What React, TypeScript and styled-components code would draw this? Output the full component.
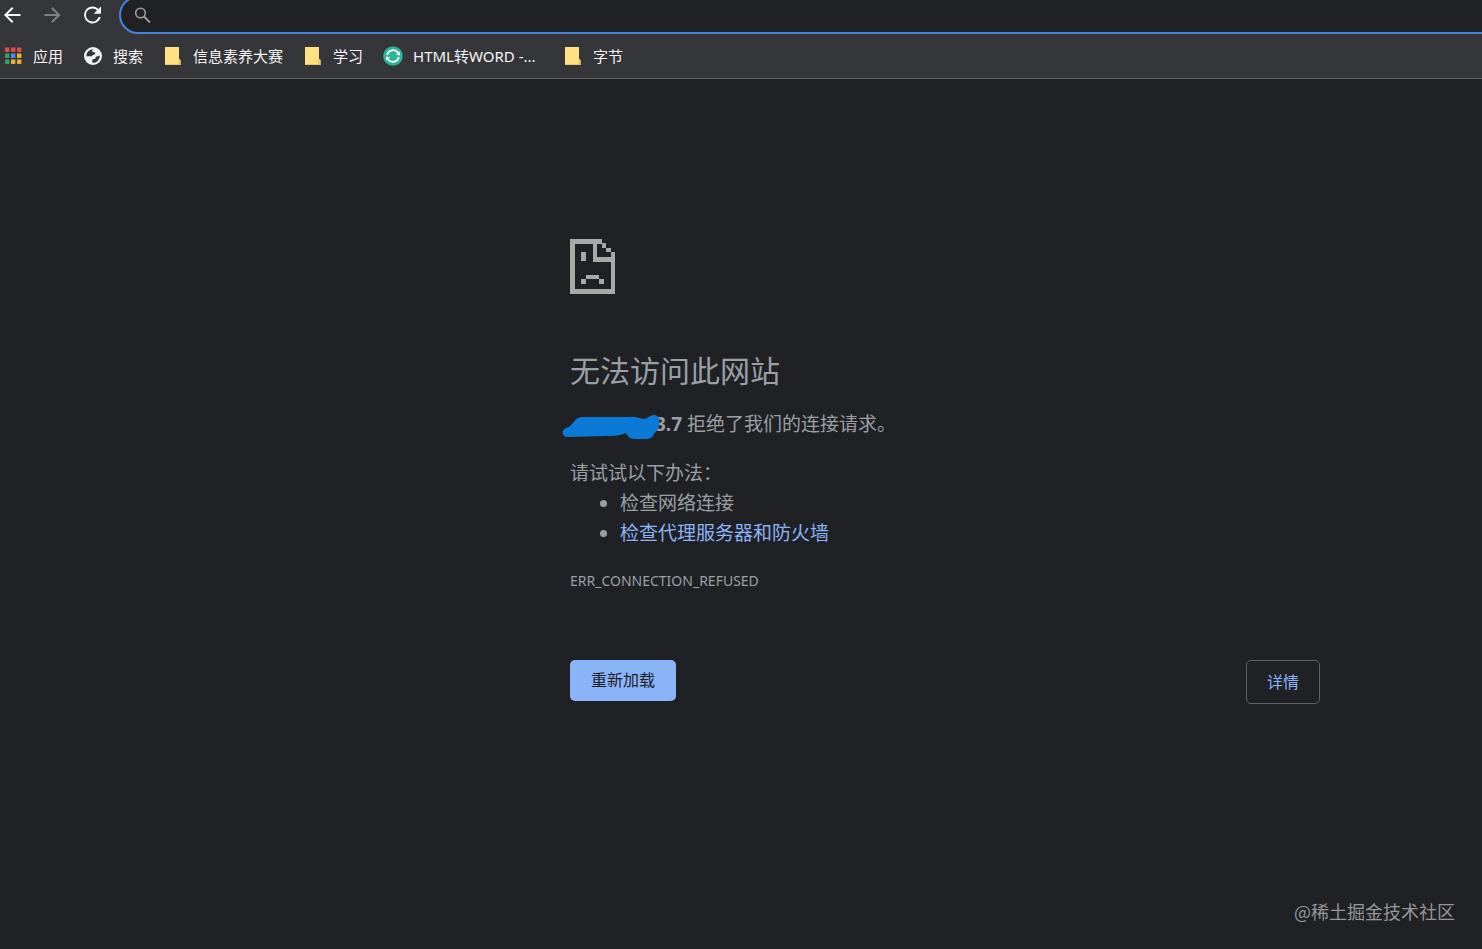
import React from "react";
import styled, { createGlobalStyle } from "styled-components";

const Global = createGlobalStyle`
  * { box-sizing: border-box; }
  body {
    margin: 0;
    background: #202124;
    color: #9aa0a6;
    font-family: "Noto Sans", "Noto Sans CJK SC", sans-serif;
  }
`;

const Page = styled.div`
  min-height: 100vh;
  display: flex;
  flex-direction: column;
  overflow: hidden;
`;

const Chrome = styled.header`
  background: #35363a;
  border-bottom: 1px solid #5c5e62;
  overflow: hidden;
`;

const Toolbar = styled.div`
  display: flex;
  height: 34px;
`;

const NavButtons = styled.div`
  display: flex;
  align-items: center;
  gap: 16px;
  height: 30px;
  margin-right: 15px;
`;

const NavButton = styled.button<{ $dim?: boolean }>`
  display: flex;
  padding: 0;
  border: 0;
  background: none;
  color: ${(p) => (p.$dim ? "#7f8184" : "#f4f5f6")};
`;

const Omnibox = styled.label`
  flex: 1;
  display: flex;
  align-items: center;
  gap: 12px;
  height: 38px;
  margin: -4px -24px 0 0;
  padding-left: 12px;
  border: 2px solid #4a82e0;
  border-radius: 20px;
  background: #202124;
  color: #9aa0a6;
`;

const UrlInput = styled.input`
  flex: 1;
  border: 0;
  outline: 0;
  background: none;
  color: #e8eaed;
  font: inherit;
`;

const Bookmarks = styled.nav`
  display: flex;
  align-items: center;
  gap: 20px;
  height: 44px;
  padding-left: 3px;
`;

const Bookmark = styled.a<{ $long?: boolean }>`
  display: flex;
  align-items: center;
  gap: 10px;
  min-width: ${(p) => (p.$long ? "160px" : "0")};
  color: #f4f5f6;
  font-size: 15px;
  line-height: 20px;
  text-decoration: none;
  white-space: nowrap;
`;

const ErrorPanel = styled.main`
  width: 750px;
  max-width: 100%;
  margin: 160px 162px 0 auto;
  font-size: 19px;
  line-height: 30px;
`;

const Title = styled.h1`
  margin: 54px 0 15px;
  font-size: 30px;
  font-weight: 400;
  line-height: 46px;
`;

const Text = styled.p`
  margin: 0;
`;

const Host = styled.strong`
  position: relative;
  display: inline-block;
  padding-left: 85px;
`;

const Scribble = styled.svg`
  position: absolute;
  left: -8px;
  top: 5px;
`;

const Suggestions = styled.section`
  margin-top: 19px;
`;

const List = styled.ul`
  margin: 0;
  padding-left: 50px;
`;

const HelpLink = styled.a`
  color: #8ab4f8;
  text-decoration: none;
`;

const ErrorCode = styled.p`
  margin: 21px 0 0;
  font-size: 14px;
  line-height: 24px;
`;

const Actions = styled.div`
  display: flex;
  justify-content: space-between;
  align-items: flex-start;
  margin-top: 67px;
`;

const Button = styled.button<{ $outlined?: boolean }>`
  padding: ${(p) => (p.$outlined ? "8px 20px" : "8px 21px")};
  border: ${(p) => (p.$outlined ? "1px solid #5f6368" : "0")};
  border-radius: 5px;
  background: ${(p) => (p.$outlined ? "transparent" : "#8ab4f8")};
  color: ${(p) => (p.$outlined ? "#8ab4f8" : "#202124")};
  font: inherit;
  font-size: 16px;
  line-height: ${(p) => (p.$outlined ? "26px" : "25px")};
`;

const Watermark = styled.footer`
  margin: auto 27px 25px auto;
  color: #95979a;
  font-family: "Noto Sans CJK SC", sans-serif;
  font-size: 18px;
  line-height: 26px;
`;

const Glyph = ({ d }: { d: string }) => (
  <svg width="24" height="24" viewBox="0 0 24 24" fill="currentColor" aria-hidden="true">
    <path d={d} />
  </svg>
);

const SearchIcon = () => (
  <svg width="20" height="20" viewBox="0 0 20 20" fill="none" stroke="currentColor" aria-hidden="true">
    <circle cx="7.5" cy="8" r="4.8" strokeWidth="1.6" />
    <path d="M11 11.5l6 6" strokeWidth="1.8" />
  </svg>
);

const appColors = ["#dd5144", "#dd5144", "#dd5144", "#34a06a", "#4a8af4", "#f0b429", "#34a06a", "#f0b429", "#f0b429"];

const AppsIcon = () => (
  <svg width="20" height="20" viewBox="0 0 20 20" aria-hidden="true">
    {appColors.map((c, i) => (
      <rect key={i} x={2 + (i % 3) * 6} y={1.5 + Math.floor(i / 3) * 6} width="4.4" height="4.4" fill={c} />
    ))}
  </svg>
);

const GlobeIcon = () => (
  <svg width="20" height="20" viewBox="0 0 20 20" aria-hidden="true">
    <circle cx="10" cy="10" r="9" fill="#f1f2f4" />
    <path d="M11 3.200C9 3.600 8.600 5 9.600 5.800c1 .7 2.600.2 2.700 1.500 0 1.200-1.200 1.300-2.300 1.700-.9.400-.4 1.300-1.800 1.300H3.200A6.900 6.900 0 0 1 11 3.200z" fill="#35363a" />
    <path d="M16.900 9.600c-1 .1-1.500.9-2.900.9-1.200 0-1.300.3-1.300 1.100 0 1-.6 1.300-1.700 1.400-1.300.1-1.700.8-1.700 1.800v2A6.900 6.900 0 0 0 16.900 9.600z" fill="#35363a" />
  </svg>
);

const FolderIcon = () => (
  <svg width="20" height="20" viewBox="0 0 20 20" aria-hidden="true">
    <path d="M2 1h14v12l1.500 1v5H2z" fill="#ffe082" />
    <path d="M14.800 19v-4.500l1.200-1.500 1.500 1v5z" fill="#efcf6c" />
    <path d="M2 18.500h15.500" stroke="#e9c65c" />
  </svg>
);

const SyncIcon = () => (
  <svg width="20" height="20" viewBox="0 0 20 20" aria-hidden="true">
    <circle cx="10" cy="10" r="9.800" fill="#2bb596" />
    <g fill="none" stroke="#fff" strokeWidth="1.800">
      <path d="M4.200 9a6 6 0 0 1 10.800-2.200" />
      <path d="M15.800 11a6 6 0 0 1-10.800 2.200" />
    </g>
    <path d="M17 5.500v4L12.800 8.800zM3 14.500v-4l4.200.7z" fill="#fff" />
  </svg>
);

const SadPageIcon = () => (
  <svg width="46" height="55" viewBox="0 0 46 55" shapeRendering="crispEdges" fill="#a9a9a9" aria-hidden="true" style={{ display: "block" }}>
    <path d="M0 0h32v5H5v45h36V23H23V5h4v13h14v-5h4v42H0z" />
    <path d="M32 4h4v5h-4zM36 9h5v4h-5zM11 13h5v9h-5zM16 36h13v4H16zM11 40h5v5h-5zM29 40h5v5h-5z" />
  </svg>
);

const bookmarks = [
  { label: "应用", Icon: AppsIcon },
  { label: "搜索", Icon: GlobeIcon },
  { label: "信息素养大赛", Icon: FolderIcon },
  { label: "学习", Icon: FolderIcon },
  { label: "HTML转WORD -...", Icon: SyncIcon, long: true },
  { label: "字节", Icon: FolderIcon },
];

export default function App() {
  return (
    <Page>
      <Global />
      <Chrome>
        <Toolbar>
          <NavButtons>
            <NavButton aria-label="后退">
              <Glyph d="M20.500 11H7.830l5.590-5.590L12 4l-8 8 8 8 1.410-1.410L7.830 13H20.500v-2z" />
            </NavButton>
            <NavButton $dim aria-label="前进">
              <Glyph d="M12.500 4l-1.410 1.410L16.670 11H4.500v2h12.170l-5.580 5.590L12.500 20l8-8z" />
            </NavButton>
            <NavButton aria-label="刷新">
              <Glyph d="M18.400 5.900A8.600 8.600 0 0 0 12.500 3.500a8.500 8.500 0 1 0 8.300 10.500h-2.200A6.500 6.500 0 1 1 12.500 5.500c1.800 0 3.300.700 4.500 1.900L13.700 10.700h7.300V3.400z" />
            </NavButton>
          </NavButtons>
          <Omnibox>
            <SearchIcon />
            <UrlInput type="text" aria-label="地址和搜索栏" />
          </Omnibox>
        </Toolbar>
        <Bookmarks>
          {bookmarks.map(({ label, Icon, long }) => (
            <Bookmark href="#" key={label} $long={long}>
              <Icon />
              {label}
            </Bookmark>
          ))}
        </Bookmarks>
      </Chrome>
      <ErrorPanel>
        <SadPageIcon />
        <Title>无法访问此网站</Title>
        <Text>
          <Host>
            3.7
            <Scribble width="100" height="26" viewBox="0 0 100 26" aria-hidden="true">
              <path
                d="M5 23C0 23-1 16 4 14C8 13 9 11 11 9C14 4 17 3 22 3H66C73 2 77 4 81 5C86 5 87 1 92 1C97 1 98 5 97 9C98 15 94 17 92 20C90 25 86 25 82 25H74C67 25 66 22 64 19C58 22 50 22 43 22Z"
                fill="#0a7ad6"
              />
            </Scribble>
          </Host>{" "}
          拒绝了我们的连接请求。
        </Text>
        <Suggestions>
          <Text>请试试以下办法：</Text>
          <List>
            <li>检查网络连接</li>
            <li>
              <HelpLink href="#">检查代理服务器和防火墙</HelpLink>
            </li>
          </List>
        </Suggestions>
        <ErrorCode>ERR_CONNECTION_REFUSED</ErrorCode>
        <Actions>
          <Button>重新加载</Button>
          <Button $outlined>详情</Button>
        </Actions>
      </ErrorPanel>
      <Watermark>@稀土掘金技术社区</Watermark>
    </Page>
  );
}
